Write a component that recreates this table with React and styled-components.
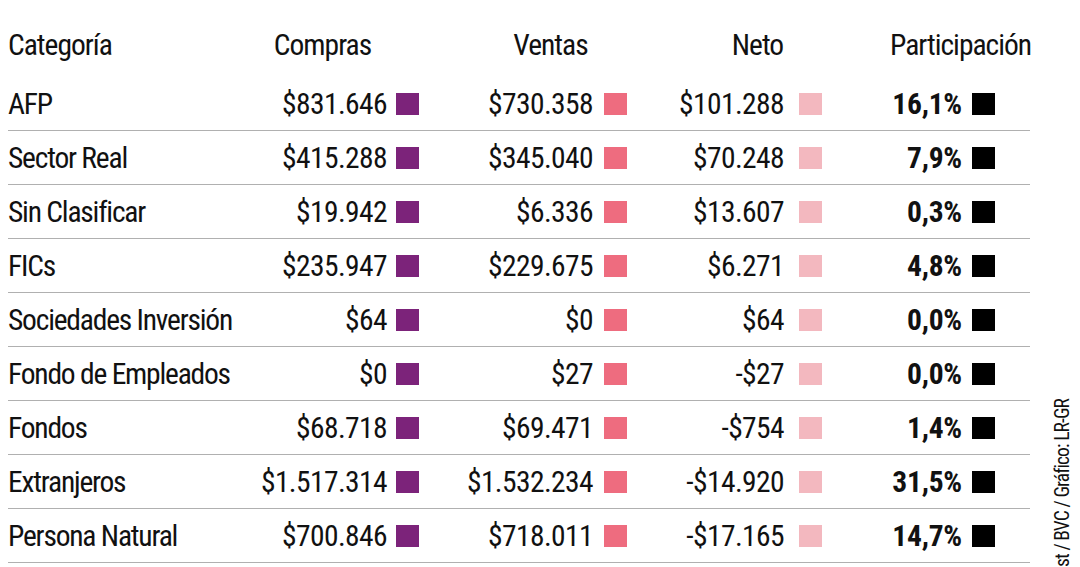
import styled, { createGlobalStyle } from "styled-components";

const GlobalStyle = createGlobalStyle`
  html, body {
    margin: 0;
    padding: 0;
    background: #ffffff;
  }
  body {
    font-family: "Roboto Condensed", "Liberation Sans Narrow", sans-serif;
    color: #111111;
  }
`;

const Page = styled.div`
  display: flex;
  width: 1080px;
  height: 567px;
  overflow: hidden;
`;

const Table = styled.div`
  display: grid;
  grid-template-columns: 242px 169px 208px 195px 173px 35px;
  grid-template-rows: 59px;
  grid-auto-rows: 54px;
  width: 1022px;
  margin-left: 8px;
  padding-top: 18px;
  font-size: 29.5px;
  flex-shrink: 0;
`;

const HeaderCell = styled.div`
  display: flex;
  align-items: center;
  justify-content: ${(p) => (p.$left ? "flex-start" : "center")};
  height: 53px;
  padding: ${(p) => p.$pad || "0"};
  grid-column: ${(p) => p.$span || "auto"};
  letter-spacing: -1px;
`;

const Row = styled.div`
  display: contents;
`;

const Cell = styled.div`
  box-sizing: border-box;
  display: flex;
  align-items: center;
  height: 54px;
  border-bottom: 1px solid #b0b0b0;
`;

const Label = styled(Cell)`
  letter-spacing: -1.2px;
`;

const Value = styled(Cell)`
  justify-content: flex-end;
  gap: ${(p) => p.$gap}px;
  font-weight: ${(p) => (p.$bold ? 700 : 400)};
  letter-spacing: ${(p) => (p.$bold ? "-0.2px" : "-0.6px")};
`;

const Swatch = styled.span`
  width: 23px;
  height: 22px;
  background: ${(p) => p.$color};
  flex-shrink: 0;
`;

const Filler = styled(Cell)``;

const Aside = styled.div`
  flex: 1;
  display: flex;
  justify-content: center;
  padding-top: 399px;
  padding-left: 14px;
`;

const Source = styled.div`
  writing-mode: vertical-rl;
  transform: rotate(180deg);
  font-size: 19.5px;
  letter-spacing: -0.9px;
  white-space: nowrap;
  color: #111111;
`;

const columns = [
  { key: "compras", color: "#7c237a", gap: 9 },
  { key: "ventas", color: "#ee6c7f", gap: 11 },
  { key: "neto", color: "#f3b8bf", gap: 15 },
  { key: "part", color: "#000000", gap: 10, bold: true },
];

const rows = [
  ["AFP", "$831.646", "$730.358", "$101.288", "16,1%"],
  ["Sector Real", "$415.288", "$345.040", "$70.248", "7,9%"],
  ["Sin Clasificar", "$19.942", "$6.336", "$13.607", "0,3%"],
  ["FICs", "$235.947", "$229.675", "$6.271", "4,8%"],
  ["Sociedades Inversión", "$64", "$0", "$64", "0,0%"],
  ["Fondo de Empleados", "$0", "$27", "-$27", "0,0%"],
  ["Fondos", "$68.718", "$69.471", "-$754", "1,4%"],
  ["Extranjeros", "$1.517.314", "$1.532.234", "-$14.920", "31,5%"],
  ["Persona Natural", "$700.846", "$718.011", "-$17.165", "14,7%"],
];

export default function App() {
  return (
    <>
      <GlobalStyle />
      <Page>
        <Table>
          <HeaderCell $left>Categoría</HeaderCell>
          <HeaderCell $pad="0 24px 0 0">Compras</HeaderCell>
          <HeaderCell $pad="0 0 0 55px">Ventas</HeaderCell>
          <HeaderCell $pad="0 0 0 66px">Neto</HeaderCell>
          <HeaderCell $span="span 2" $pad="0 0 0 69px">Participación</HeaderCell>

          {rows.map(([name, ...values]) => (
            <Row key={name}>
              <Label>{name}</Label>
              {values.map((v, i) => (
                <Value key={columns[i].key} $gap={columns[i].gap} $bold={columns[i].bold}>
                  {v}
                  <Swatch $color={columns[i].color} />
                </Value>
              ))}
              <Filler />
            </Row>
          ))}
        </Table>
        <Aside>
          <Source>st / BVC / Gráfico: LR-GR</Source>
        </Aside>
      </Page>
    </>
  );
}
